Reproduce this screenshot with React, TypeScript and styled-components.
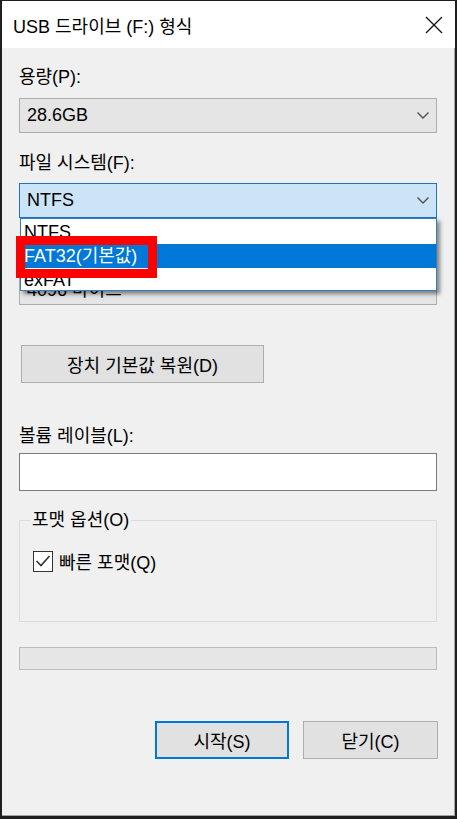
import React from "react";
import styled, { createGlobalStyle } from "styled-components";

const Global = createGlobalStyle`
  html, body { margin: 0; padding: 0; background: #ffffff; }
  body { font-family: "Liberation Sans", "Noto Sans CJK KR", sans-serif; color: #000; }
  * { box-sizing: border-box; }
`;

const Window = styled.div`
  width: 457px;
  height: 819px;
  border-style: solid;
  border-color: #1f1f1f;
  border-width: 1px 2px 3px 2px;
  box-shadow: inset -1px -1px 0 #a3a3a3;
  background: #f0f0f0;
  display: flex;
  flex-direction: column;
`;

const TitleBar = styled.div`
  height: 47px;
  flex: none;
  background: #ffffff;
  display: flex;
  align-items: center;
  justify-content: space-between;
  padding: 0 12px 0 11px;
  font-size: 18px;
`;

const Body = styled.div`
  display: flex;
  flex-direction: column;
  padding: 0 18px 0 17px;
  font-size: 18px;
`;

const Label = styled.div<{ $mt: number }>`
  margin-top: ${(p) => p.$mt}px;
  height: 24px;
  line-height: 24px;
`;

const ComboWrap = styled.div<{ $mt: number; $top?: boolean }>`
  position: relative;
  margin-top: ${(p) => p.$mt}px;
  z-index: ${(p) => (p.$top ? 5 : 1)};
`;

const Combo = styled.div<{ $focused?: boolean }>`
  height: 35px;
  border: 1px solid ${(p) => (p.$focused ? "#2474bd" : "#adadad")};
  background: ${(p) => (p.$focused ? "#cce4f7" : "#e5e5e5")};
  display: flex;
  align-items: center;
  justify-content: space-between;
  padding: 0 6px 0 7px;
`;

const List = styled.div`
  position: absolute;
  top: 100%;
  left: 1px;
  right: 0;
  height: 73px;
  background: #ffffff;
  border: 1px solid #2f7fc6;
  padding-top: 1px;
  box-shadow: 3px 3px 4px rgba(0, 0, 0, 0.45);
`;

const ListClip = styled.div`
  height: 70px;
  overflow: hidden;
`;

const Item = styled.div<{ $selected?: boolean }>`
  height: 24px;
  line-height: 24px;
  padding-left: 3px;
  background: ${(p) => (p.$selected ? "#0078d7" : "transparent")};
  color: ${(p) => (p.$selected ? "#ffffff" : "#000000")};
`;

const RedMark = styled.div`
  position: absolute;
  left: -5px;
  top: 17px;
  width: 141px;
  height: 42px;
  border: 9px solid #ff0000;
  pointer-events: none;
`;

const Button = styled.div<{ $primary?: boolean; $w: number }>`
  width: ${(p) => p.$w}px;
  height: 38px;
  display: flex;
  align-items: center;
  justify-content: center;
  background: #e1e1e1;
  border: ${(p) => (p.$primary ? "2px solid #0078d7" : "1px solid #adadad")};
  font-size: 18px;
`;

const ResetRow = styled.div`
  margin-top: 40px;
  padding-left: 2px;
  display: flex;
`;

const TextBox = styled.div`
  margin-top: 5px;
  height: 38px;
  background: #ffffff;
  border: 1px solid #7a7a7a;
`;

const Group = styled.fieldset`
  margin: 17px 0 0 0;
  padding: 0 0 48px 13px;
  border: 1px solid #dcdcdc;
  min-inline-size: 0;
`;

const Legend = styled.legend`
  margin-left: -3px;
  padding: 0 2px;
  height: 24px;
  line-height: 24px;
  font-size: 18px;
`;

const CheckRow = styled.div`
  margin-top: 17px;
  height: 24px;
  display: flex;
  align-items: center;
  gap: 6px;
`;

const CheckBox = styled.div`
  width: 20px;
  height: 21px;
  border: 1px solid #333333;
  background: #ffffff;
  display: flex;
  align-items: center;
  justify-content: center;
`;

const Progress = styled.div`
  margin-top: 25px;
  height: 23px;
  background: #e6e6e6;
  border: 1px solid #bcbcbc;
`;

const Actions = styled.div`
  margin-top: 51px;
  margin-right: -1px;
  display: flex;
  justify-content: flex-end;
  gap: 14px;
`;

const Chevron = () => (
  <svg width="14" height="9" viewBox="0 0 14 9">
    <polyline points="1.5,1.5 7,7 12.5,1.5" fill="none" stroke="#505050" strokeWidth="1.4" />
  </svg>
);

const CloseIcon = () => (
  <svg width="18" height="18" viewBox="0 0 18 18">
    <line x1="1" y1="1" x2="17" y2="17" stroke="#111" strokeWidth="1.3" />
    <line x1="17" y1="1" x2="1" y2="17" stroke="#111" strokeWidth="1.3" />
  </svg>
);

export default function App() {
  return (
    <>
      <Global />
      <Window>
        <TitleBar>
          <span>USB 드라이브 (F:) 형식</span>
          <CloseIcon />
        </TitleBar>
        <Body>
          <Label $mt={17}>용량(P):</Label>
          <ComboWrap $mt={9}>
            <Combo>
              <span>28.6GB</span>
              <Chevron />
            </Combo>
          </ComboWrap>

          <Label $mt={18}>파일 시스템(F):</Label>
          <ComboWrap $mt={8} $top>
            <Combo $focused>
              <span>NTFS</span>
              <Chevron />
            </Combo>
            <List>
              <ListClip>
                <Item>NTFS</Item>
                <Item $selected>FAT32(기본값)</Item>
                <Item>exFAT</Item>
              </ListClip>
              <RedMark />
            </List>
          </ComboWrap>

          <Label $mt={20}>할당 단위 크기(A):</Label>
          <ComboWrap $mt={8}>
            <Combo>
              <span>4096 바이트</span>
              <Chevron />
            </Combo>
          </ComboWrap>

          <ResetRow>
            <Button $w={243}>장치 기본값 복원(D)</Button>
          </ResetRow>

          <Label $mt={41}>볼륨 레이블(L):</Label>
          <TextBox />

          <Group>
            <Legend>포맷 옵션(O)</Legend>
            <CheckRow>
              <CheckBox>
                <svg width="16" height="14" viewBox="0 0 16 14">
                  <polyline points="1.5,7 6,11.5 14.5,2" fill="none" stroke="#333" strokeWidth="1.6" />
                </svg>
              </CheckBox>
              <span>빠른 포맷(Q)</span>
            </CheckRow>
          </Group>

          <Progress />

          <Actions>
            <Button $primary $w={134}>시작(S)</Button>
            <Button $w={135}>닫기(C)</Button>
          </Actions>
        </Body>
      </Window>
    </>
  );
}
